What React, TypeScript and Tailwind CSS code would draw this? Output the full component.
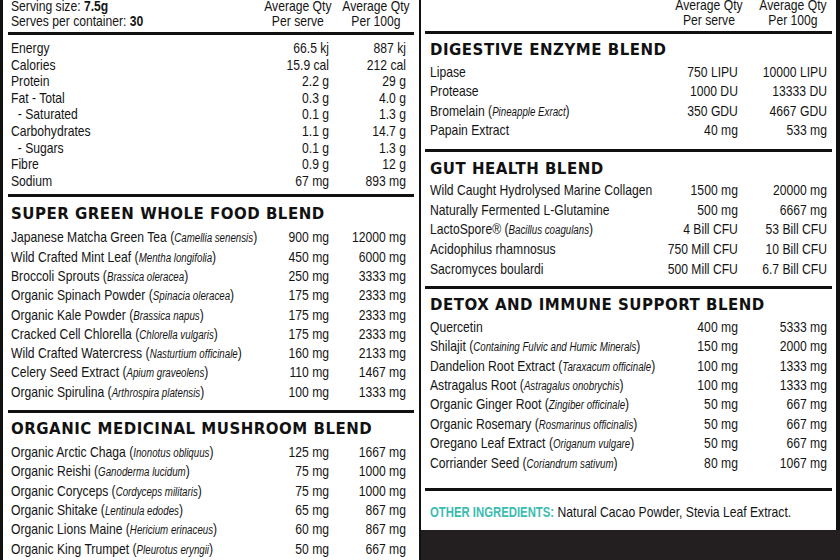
import React from "react";

type Item = [string, string | null, string, string];

const nutrition: [string, string, string][] = [
  ["Energy", "66.5 kj", "887 kj"],
  ["Calories", "15.9 cal", "212 cal"],
  ["Protein", "2.2 g", "29 g"],
  ["Fat - Total", "0.3 g", "4.0 g"],
  ["\u00a0\u00a0- Saturated", "0.1 g", "1.3 g"],
  ["Carbohydrates", "1.1 g", "14.7 g"],
  ["\u00a0\u00a0- Sugars", "0.1 g", "1.3 g"],
  ["Fibre", "0.9 g", "12 g"],
  ["Sodium", "67 mg", "893 mg"],
];

const superGreen: Item[] = [
  ["Japanese Matcha Green Tea", "Camellia senensis", "900 mg", "12000 mg"],
  ["Wild Crafted Mint Leaf", "Mentha longifolia", "450 mg", "6000 mg"],
  ["Broccoli Sprouts", "Brassica oleracea", "250 mg", "3333 mg"],
  ["Organic Spinach Powder", "Spinacia oleracea", "175 mg", "2333 mg"],
  ["Organic Kale Powder", "Brassica napus", "175 mg", "2333 mg"],
  ["Cracked Cell Chlorella", "Chlorella vulgaris", "175 mg", "2333 mg"],
  ["Wild Crafted Watercress", "Nasturtium officinale", "160 mg", "2133 mg"],
  ["Celery Seed Extract", "Apium graveolens", "110 mg", "1467 mg"],
  ["Organic Spirulina", "Arthrospira platensis", "100 mg", "1333 mg"],
];

const mushroom: Item[] = [
  ["Organic Arctic Chaga", "Inonotus obliquus", "125 mg", "1667 mg"],
  ["Organic Reishi", "Ganoderma lucidum", "75 mg", "1000 mg"],
  ["Organic Coryceps", "Cordyceps militaris", "75 mg", "1000 mg"],
  ["Organic Shitake", "Lentinula edodes", "65 mg", "867 mg"],
  ["Organic Lions Maine", "Hericium erinaceus", "60 mg", "867 mg"],
  ["Organic King Trumpet", "Pleurotus eryngii", "50 mg", "667 mg"],
];

const digestive: Item[] = [
  ["Lipase", null, "750 LIPU", "10000 LIPU"],
  ["Protease", null, "1000 DU", "13333 DU"],
  ["Bromelain", "Pineapple Exract", "350 GDU", "4667 GDU"],
  ["Papain Extract", null, "40 mg", "533 mg"],
];

const gut: Item[] = [
  ["Wild Caught Hydrolysed Marine Collagen", null, "1500 mg", "20000 mg"],
  ["Naturally Fermented L-Glutamine", null, "500 mg", "6667 mg"],
  ["LactoSpore\u00ae", "Bacillus coagulans", "4 Bill CFU", "53 Bill CFU"],
  ["Acidophilus rhamnosus", null, "750 Mill CFU", "10 Bill CFU"],
  ["Sacromyces boulardi", null, "500 Mill CFU", "6.7 Bill CFU"],
];

const detox: Item[] = [
  ["Quercetin", null, "400 mg", "5333 mg"],
  ["Shilajit", "Containing Fulvic and Humic Minerals", "150 mg", "2000 mg"],
  ["Dandelion Root Extract", "Taraxacum officinale", "100 mg", "1333 mg"],
  ["Astragalus Root", "Astragalus onobrychis", "100 mg", "1333 mg"],
  ["Organic Ginger Root", "Zingiber officinale", "50 mg", "667 mg"],
  ["Organic Rosemary", "Rosmarinus officinalis", "50 mg", "667 mg"],
  ["Oregano Leaf Extract", "Origanum vulgare", "50 mg", "667 mg"],
  ["Corriander Seed", "Coriandrum sativum", "80 mg", "1067 mg"],
];

// no condensed face is installed, so text blocks are laid out wide and squeezed
const narrow = "w-[123.46%] origin-left scale-x-[0.81]";

function Rule({ className }: { className: string }) {
  return <div className={"h-[3px] bg-[#111] " + className} />;
}

function Heading({ children, className }: { children: string; className: string }) {
  return (
    <div
      className={
        "font-['DejaVu_Sans',sans-serif] text-[15px] leading-[18px] font-bold tracking-[0.5px] text-[#111] " +
        className
      }
    >
      {children}
    </div>
  );
}

function Name({ name, latin }: { name: string; latin: string | null }) {
  return (
    <div className="min-w-0 flex-1 whitespace-nowrap">
      {name}
      {latin && (
        <>
          {" ("}
          <span className="text-[12px] leading-none italic">{latin}</span>
          {")"}
        </>
      )}
    </div>
  );
}

function Rows({
  items,
  lead,
  colA,
  colB,
  className,
}: {
  items: Item[];
  lead: string;
  colA: string;
  colB: string;
  className: string;
}) {
  return (
    <div className={narrow + " " + className}>
      {items.map((it, i) => (
        <div key={i} className={"flex " + lead}>
          <Name name={it[0]} latin={it[1]} />
          <div className={"shrink-0 text-right whitespace-nowrap " + colA}>{it[2]}</div>
          <div className={"shrink-0 text-right whitespace-nowrap " + colB}>{it[3]}</div>
        </div>
      ))}
    </div>
  );
}

export default function App() {
  return (
    <div className="flex h-[560px] w-[840px] overflow-hidden bg-white font-['Liberation_Sans',Arial,sans-serif] text-[15px] text-[#141414]">
      {/* left panel */}
      <div className="w-[421px] shrink-0 border-r-2 border-l-[3px] border-[#111] px-[5px]">
        <div className="pr-[2px] pl-[3px]">
          <div className={"-mt-[2px] flex leading-[15px] whitespace-nowrap " + narrow}>
            <div className="flex-1">
              <div>
                Serving size: <b>7.5g</b>
              </div>
              <div>
                Serves per container: <b>30</b>
              </div>
            </div>
            <div className="w-[89px] text-center">
              <div>Average Qty</div>
              <div>Per serve</div>
            </div>
            <div className="ml-[7.4px] w-[89px] text-center">
              <div>Average Qty</div>
              <div>Per 100g</div>
            </div>
          </div>
        </div>
        <Rule className="mt-[4px]" />
        <div className="pr-[8px] pl-[3px]">
          <div className={"mt-[5px] " + narrow}>
            {nutrition.map((n, i) => (
              <div key={i} className="flex leading-[16.6px] whitespace-nowrap">
                <div className="flex-1 whitespace-pre">{n[0]}</div>
                <div className="w-[99px] text-right">{n[1]}</div>
                <div className="w-[95px] text-right">{n[2]}</div>
              </div>
            ))}
          </div>
        </div>
        <Rule className="mt-[4.5px]" />
        <div className="pr-[8px] pl-[3px]">
          <Heading className="mt-[8px]">SUPER GREEN WHOLE FOOD BLEND</Heading>
          <Rows items={superGreen} lead="leading-[19.3px]" colA="w-[99px]" colB="w-[95px]" className="mt-[4.5px]" />
        </div>
        <Rule className="mt-[9px]" />
        <div className="pr-[8px] pl-[3px]">
          <Heading className="mt-[7px]">ORGANIC MEDICINAL MUSHROOM BLEND</Heading>
          <Rows items={mushroom} lead="leading-[19.3px]" colA="w-[99px]" colB="w-[95px]" className="mt-[4px]" />
        </div>
      </div>

      {/* right panel */}
      <div className="flex min-w-0 flex-1 flex-col">
        <div className="min-h-0 flex-1 border-r-4 border-[#111] px-[4px]">
          <div className="pr-[5px]">
            <div className={"-mt-[3px] flex justify-end gap-[19.75px] leading-[15px] whitespace-nowrap " + narrow}>
              <div className="flex w-[84px] flex-col items-center">
                <div>Average Qty</div>
                <div>Per serve</div>
              </div>
              <div className="flex w-[84px] flex-col items-center">
                <div>Average Qty</div>
                <div>Per 100g</div>
              </div>
            </div>
          </div>
          <Rule className="mt-[4px]" />
          <div className="px-[5px]">
            <Heading className="mt-[7px]">DIGESTIVE ENZYME BLEND</Heading>
            <Rows items={digestive} lead="leading-[19.4px]" colA="w-[111px]" colB="w-[110px]" className="mt-[3px]" />
          </div>
          <Rule className="mt-[9px]" />
          <div className="px-[5px]">
            <Heading className="mt-[8.5px]">GUT HEALTH BLEND</Heading>
            <Rows items={gut} lead="leading-[19.6px]" colA="w-[111px]" colB="w-[110px]" className="mt-[2px]" />
          </div>
          <Rule className="mt-[8px]" />
          <div className="px-[5px]">
            <Heading className="mt-[7px]">DETOX AND IMMUNE SUPPORT BLEND</Heading>
            <Rows items={detox} lead="leading-[19.47px]" colA="w-[111px]" colB="w-[110px]" className="mt-[2.5px]" />
          </div>
          <Rule className="mt-[15.5px]" />
          <div className="px-[5px]">
            <div className={"mt-[11px] leading-[19.4px] whitespace-nowrap " + narrow}>
              <span className="text-[14px] font-bold text-[#3cbcb0]">OTHER INGREDIENTS:</span>{" "}
              <span>Natural Cacao Powder, Stevia Leaf Extract.</span>
            </div>
          </div>
        </div>
        <div className="h-[30px] shrink-0 bg-[#231f20]" />
      </div>
    </div>
  );
}
